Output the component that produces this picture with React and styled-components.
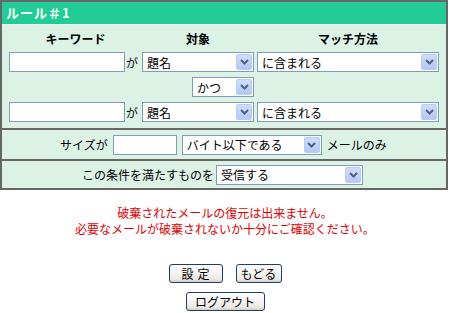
import React from "react";
import styled, { createGlobalStyle } from "styled-components";

const GlobalStyle = createGlobalStyle`
    body {
        margin: 0;
        background: #fff;
        font-family: "Noto Sans CJK JP", "Liberation Sans", sans-serif;
        font-size: 12px;
        color: #000;
    }
`;

const Page = styled.div`
    width: 450px;
`;

const Panel = styled.div`
    width: 444px;
    border: 2px solid #666;
    background: #dcf2e5;
`;

const Header = styled.div`
    height: 22px;
    background: #22cc95;
    border-bottom: 1px solid #f0faf4;
    color: #fff;
    font-weight: bold;
    font-size: 13px;
    line-height: 22px;
    padding-left: 4px;
    letter-spacing: 1px;
`;

const Section = styled.div`
    border-top: ${(p) => (p.$first ? "none" : "2px solid #666")};
    padding: ${(p) => p.$pad || "0"};
    display: flex;
    align-items: center;
    gap: ${(p) => p.$gap || "0"};
    height: ${(p) => p.$h || "auto"};
`;

const RuleGrid = styled.div`
    display: grid;
    grid-template-columns: 116px 17px 112px 3px 182px;
    grid-template-rows: 17px 20px 20px 20px;
    row-gap: 5px;
    padding: 5px 0 6px 7px;
    align-items: center;
`;

const ColHead = styled.div`
    font-weight: bold;
    text-align: center;
    line-height: 17px;
    grid-column: ${(p) => p.$col};
    grid-row: 1;
`;

const TextInput = styled.input`
    box-sizing: border-box;
    width: ${(p) => p.$w}px;
    height: 20px;
    border: 1px solid #7f9db9;
    background: #fff;
    padding: 1px 3px;
    font: inherit;
    outline: none;
    grid-column: 1;
    grid-row: ${(p) => p.$row || "auto"};
`;

const Ga = styled.span`
    padding-left: 1px;
    grid-column: 2;
    grid-row: ${(p) => p.$row};
`;

const SelectBox = styled.div`
    box-sizing: border-box;
    width: ${(p) => p.$w}px;
    height: 20px;
    border: 1px solid #7f9db9;
    background: #fff;
    display: flex;
    align-items: center;
    justify-self: ${(p) => p.$align || "start"};
    padding: 1px;
    grid-column: ${(p) => p.$col || "auto"};
    grid-row: ${(p) => p.$row || "auto"};
`;

const SelectText = styled.span`
    flex: 1;
    padding-left: 3px;
    white-space: nowrap;
    overflow: hidden;
`;

const ArrowBtn = styled.span`
    width: 16px;
    height: 16px;
    box-sizing: border-box;
    border: 1px solid #b9cbf3;
    border-radius: 2px;
    background: linear-gradient(#d0dcfb, #b3c8f6);
    display: flex;
    align-items: center;
    justify-content: center;
`;

const Label = styled.span`
    white-space: nowrap;
`;

const Notice = styled.div`
    color: #e00000;
    text-align: center;
    line-height: 16px;
    margin-top: 15px;
`;

const Buttons = styled.div`
    display: flex;
    flex-direction: column;
    align-items: center;
    gap: 9px;
    margin-top: 27px;
`;

const ButtonRow = styled.div`
    display: flex;
    gap: 13px;
`;

const Button = styled.button`
    box-sizing: border-box;
    width: ${(p) => p.$w}px;
    height: 19px;
    border: 1px solid #1c3f6e;
    border-radius: 3px;
    background: linear-gradient(#ffffff, #ecebe6 80%, #d6d0c5);
    font: inherit;
    font-size: 12px;
    line-height: 15px;
    padding: 0;
    color: #000;
    letter-spacing: ${(p) => p.$ls || "0"};
    text-indent: ${(p) => p.$ls || "0"};
`;

const Chevron = () => (
    <svg width="9" height="6" viewBox="0 0 9 6">
        <path d="M1 1 L4.5 4.5 L8 1" fill="none" stroke="#4d6185" strokeWidth="2" />
    </svg>
);

const Select = ({ w, children, align, col, row }) => (
    <SelectBox $w={w} $align={align} $col={col} $row={row}>
        <SelectText>{children}</SelectText>
        <ArrowBtn>
            <Chevron />
        </ArrowBtn>
    </SelectBox>
);

export default function App() {
    return (
        <Page>
            <GlobalStyle />
            <Panel>
                <Header>ルール＃1</Header>
                <Section $first>
                    <RuleGrid>
                        <ColHead $col="1 / 3">キーワード</ColHead>
                        <ColHead $col="3">対象</ColHead>
                        <ColHead $col="5">マッチ方法</ColHead>

                        <TextInput $w={116} $row={2} />
                        <Ga $row={2}>が</Ga>
                        <Select w={112} col={3} row={2}>題名</Select>
                        <Select w={182} col={5} row={2}>に含まれる</Select>

                        <Select w={62} col={3} row={3} align="end">かつ</Select>

                        <TextInput $w={116} $row={4} />
                        <Ga $row={4}>が</Ga>
                        <Select w={112} col={3} row={4}>題名</Select>
                        <Select w={182} col={5} row={4}>に含まれる</Select>
                    </RuleGrid>
                </Section>
                <Section $h="29px" $pad="0 0 0 58px" $gap="5px">
                    <Label>サイズが</Label>
                    <TextInput $w={64} />
                    <Select w={140}>バイト以下である</Select>
                    <Label>メールのみ</Label>
                </Section>
                <Section $h="27px" $pad="0 0 0 80px" $gap="2px">
                    <Label>この条件を満たすものを</Label>
                    <Select w={147}>受信する</Select>
                </Section>
            </Panel>
            <Notice>
                破棄されたメールの復元は出来ません。
                <br />
                必要なメールが破棄されないか十分にご確認ください。
            </Notice>
            <Buttons>
                <ButtonRow>
                    <Button $w={54} $ls="4px">設定</Button>
                    <Button $w={46}>もどる</Button>
                </ButtonRow>
                <Button $w={79}>ログアウト</Button>
            </Buttons>
        </Page>
    );
}
